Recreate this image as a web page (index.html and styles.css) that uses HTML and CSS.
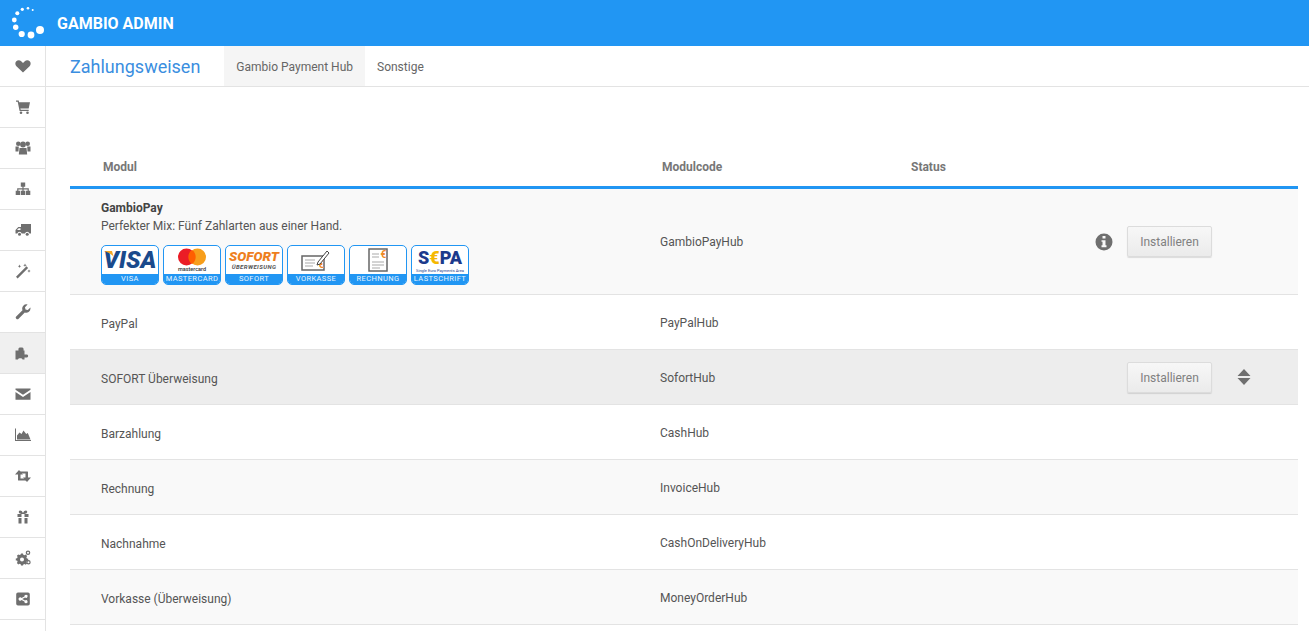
FILE: index.html
```html
<!DOCTYPE html>
<html lang="de">
<head>
    <meta charset="UTF-8">
    <meta name="viewport" content="width=device-width, initial-scale=1.0">
    <title>Zahlungsweisen</title>
    <link rel="stylesheet" href="styles.css">
</head>
<body>
    <header class="topbar">
        <svg class="logo" viewBox="0 0 46 46" width="46" height="46">
            <circle cx="40" cy="30" r="4"/><circle cx="31" cy="35" r="3.4"/><circle cx="21.7" cy="34" r="3.1"/>
            <circle cx="15.7" cy="27.3" r="2.7"/><circle cx="14.3" cy="20" r="2.4"/><circle cx="17.3" cy="13.3" r="2"/>
            <circle cx="22.3" cy="9.3" r="1.6"/><circle cx="28" cy="8.3" r="1.3"/><circle cx="32.7" cy="10" r="1"/>
        </svg>
        <span class="brand">GAMBIO ADMIN</span>
    </header>

    <div class="layout">
        <nav class="sidebar">
            <a class="side-item"><svg viewBox="0 0 16 16"><path d="M8 14.500 1.400 8.200C0 6.800 0 4.600 1.300 3.300c1.300-1.300 3.500-1.300 4.900 0L8 4.900l1.800-1.600c1.400-1.300 3.600-1.300 4.900 0 1.300 1.300 1.300 3.500-.1 4.900z"/></svg></a>
            <a class="side-item"><svg viewBox="0 0 16 16"><path d="M1 1.500h2.700l.4 1.700H15l-1.300 6.300H5.400l.3 1.300h8v1.200H4.600L2.700 2.700H1z"/><circle cx="6" cy="13.800" r="1.300"/><circle cx="12.500" cy="13.800" r="1.300"/></svg></a>
            <a class="side-item"><svg viewBox="0 0 16 16"><circle cx="3.300" cy="3.800" r="2.300"/><circle cx="12.700" cy="3.800" r="2.300"/><circle cx="8" cy="4.500" r="2.900"/><path d="M.5 6.500h3.300l-.3 5H.5zM12.200 6.500h3.300v5h-3z"/><path d="M4.500 8h7l.7 6.500H3.800z"/></svg></a>
            <a class="side-item"><svg viewBox="0 0 16 16"><path d="M5.800 1.500h4.400v4.200H8.600v1.600h5.200v2.400H15.300v4.300h-4.400V9.700h1.700V8.500H8.600v1.200h1.600v4.300H5.800V9.700h1.600V8.500H3.400v1.200h1.700v4.300H.7V9.700h1.500V7.300h5.200V5.700H5.800z"/></svg></a>
            <a class="side-item"><svg viewBox="0 0 16 16"><path d="M6 2h10v9.500h-1.600a2.300 2.300 0 0 0-4.400 0H6.700a2.300 2.300 0 0 0-4.400 0H.5V8L3.300 5H6zM2 8h3.500V6.200H3.700z"/><circle cx="4.500" cy="12.300" r="1.500"/><circle cx="12.200" cy="12.300" r="1.500"/></svg></a>
            <a class="side-item"><svg viewBox="0 0 16 16"><path d="M1 13.800 11.500 3.300l1.600 1.600L2.600 15.400z"/><path d="M10 .5l.5 1.300 1.300.5-1.300.5-.5 1.300-.5-1.300-1.300-.5 1.300-.5zM4.500 1.500l.5 1.200 1.200.5-1.200.5-.5 1.200-.5-1.200-1.200-.5 1.200-.5zM14 6.500l.5 1.100 1.100.5-1.100.5-.5 1.100-.5-1.100-1.100-.5 1.100-.5z"/></svg></a>
            <a class="side-item"><svg viewBox="0 0 16 16"><path d="M15.500 4.500a4.300 4.300 0 0 1-5.700 4L3.600 14.800a1.700 1.700 0 0 1-2.400-2.400l6.300-6.200A4.300 4.300 0 0 1 12.600.5L10 3.200l.5 2.300 2.300.5 2.600-2.600z"/></svg></a>
            <a class="side-item active"><svg viewBox="0 0 16 16"><path d="M.5 5.500H3.500C3 3 4 2.500 6 2.500S9 3 8.500 5.500H9.500V9.500H12C13.500 9.500 13.500 12.500 12 12.500H9.500V14.500H7.500C7.500 12.800 3 12.800 3 14.500H.5z"/></svg></a>
            <a class="side-item"><svg viewBox="0 0 16 16"><path d="M.5 2.500h15v1.300L8 8.800.5 3.800zM.5 6 8 11l7.500-5v7.800H.5z"/></svg></a>
            <a class="side-item"><svg viewBox="0 0 16 16"><path d="M0 1.500h1V13h15v1H0z"/><path d="M2 12.500V8.500L4.500 5.500l2 1.500L8.500 3.500l2.700 3.500 1.600-1 2.700 6.500z"/></svg></a>
            <a class="side-item"><svg viewBox="0 0 16 16"><path d="M4 2 8 6.500H5.500V10.500H11L13 12.500H3.500Q3 12.500 3 12V6.500H0z"/><path d="M12 14 8 9.500H10.500V5.500H5L3 3.500H12.500Q13 3.500 13 4V9.500H16z"/></svg></a>
            <a class="side-item"><svg viewBox="0 0 16 16"><path d="M2.500 5h11v3H9.500V5h-3v3h-4zM3.500 9h3v5.500h-3zM9.500 9h3v5.500h-3z"/><path d="M8 5C6 5 3.500 4.500 3.800 2.500 4.200.8 7 1.200 8 4 9 1.200 11.800.8 12.200 2.500 12.500 4.500 10 5 8 5z"/></svg></a>
            <a class="side-item"><svg viewBox="0 0 16 16"><path fill-rule="evenodd" d="M6 3.500h2l.3 1.300 1.200.5 1.200-.7 1.400 1.400-.7 1.200.5 1.200 1.300.3v2l-1.300.3-.5 1.200.7 1.200-1.400 1.400-1.200-.7-1.200.5L8 15.500H6l-.3-1.300-1.200-.5-1.200.7-1.400-1.400.7-1.200-.5-1.200L.8 10.500v-2L2.100 8.200l.5-1.200-.7-1.200 1.400-1.400 1.200.7 1.200-.5zM7 7.500a2 2 0 1 0 0 4 2 2 0 0 0 0-4z"/><path fill-rule="evenodd" d="M13 .5a2.300 2.300 0 1 1 0 4.600A2.300 2.300 0 0 1 13 .5zm0 1.300a1 1 0 1 0 0 2 1 1 0 0 0 0-2zM13.500 10a2.200 2.200 0 1 1 0 4.400 2.200 2.200 0 0 1 0-4.400zm0 1.200a1 1 0 1 0 0 2 1 1 0 0 0 0-2z"/></svg></a>
            <a class="side-item"><svg viewBox="0 0 16 16"><path fill-rule="evenodd" d="M3 1.500h10a1.800 1.800 0 0 1 1.800 1.800v9.400a1.800 1.800 0 0 1-1.800 1.800H3a1.800 1.800 0 0 1-1.800-1.800V3.300A1.800 1.800 0 0 1 3 1.500zM11 3.700a1.600 1.600 0 0 0-1.600 1.800L6.600 7a1.700 1.700 0 1 0 0 2l2.800 1.500a1.600 1.600 0 1 0 .6-1.100L7.200 8l2.800-1.400A1.600 1.600 0 1 0 11 3.700z"/></svg></a>
        </nav>

        <main class="content">
            <div class="subheader">
                <h1 class="page-title">Zahlungsweisen</h1>
                <a class="tab active">Gambio Payment Hub</a>
                <a class="tab">Sonstige</a>
            </div>

            <table class="modules">
                <thead>
                    <tr>
                        <th class="col-name">Modul</th>
                        <th class="col-code">Modulcode</th>
                        <th class="col-status">Status</th>
                        <th></th>
                    </tr>
                </thead>
                <tbody>
                    <tr class="odd">
                        <td class="module-cell">
                            <div class="module-title">GambioPay</div>
                            <div class="module-desc">Perfekter Mix: Fünf Zahlarten aus einer Hand.</div>
                            <div class="badges">
                                <div class="badge">
                                    <div class="badge-logo">
                                        <span class="visa"><svg class="visa-wing" viewBox="0 0 10 6" width="11" height="6"><path d="M0 0h8.500L10 5.500C8 3 4 1 0 0z" fill="#f5a623"/></svg>VISA</span>
                                    </div>
                                    <div class="badge-label">VISA</div>
                                </div>
                                <div class="badge">
                                    <div class="badge-logo mc">
                                        <svg viewBox="0 0 30 18" width="30" height="18"><circle cx="9.500" cy="9" r="8.500" fill="#eb1c26"/><circle cx="20.500" cy="9" r="8.500" fill="#f79e1b"/><path d="M15 2a8.500 8.500 0 0 1 0 14 8.500 8.500 0 0 1 0-14z" fill="#ff5f00"/></svg>
                                        <span class="mc-word">mastercard</span>
                                    </div>
                                    <div class="badge-label">MASTERCARD</div>
                                </div>
                                <div class="badge">
                                    <div class="badge-logo sofort">
                                        <span class="sofort-top">SOFORT</span>
                                        <span class="sofort-sub">ÜBERWEISUNG</span>
                                    </div>
                                    <div class="badge-label">SOFORT</div>
                                </div>
                                <div class="badge">
                                    <div class="badge-logo">
                                        <svg viewBox="0 0 30 24" width="30" height="24"><rect x="1" y="8" width="22" height="14" fill="#fff" stroke="#666" stroke-width="1.500"/><path d="M4 12h10M4 15h10M4 18h8" stroke="#aaa" stroke-width="1.200"/><text x="17" y="20" class="euro">€</text><path d="M17 14 26 3l2 2-9 11-3 1z" fill="#fff" stroke="#444"/></svg>
                                    </div>
                                    <div class="badge-label">VORKASSE</div>
                                </div>
                                <div class="badge">
                                    <div class="badge-logo">
                                        <svg viewBox="0 0 20 24" width="20" height="24"><rect x="1" y="1" width="18" height="22" fill="#fff" stroke="#666" stroke-width="1.500"/><path d="M4 6h7M4 9h7M4 14h12M4 17h12M4 20h8" stroke="#aaa" stroke-width="1.200"/><text x="12.500" y="10" class="euro">€</text></svg>
                                    </div>
                                    <div class="badge-label">RECHNUNG</div>
                                </div>
                                <div class="badge">
                                    <div class="badge-logo sepa">
                                        <span class="sepa-word">S<i>€</i>PA</span>
                                        <span class="sepa-sub">Single Euro Payments Area</span>
                                    </div>
                                    <div class="badge-label">LASTSCHRIFT</div>
                                </div>
                            </div>
                        </td>
                        <td>GambioPayHub</td>
                        <td></td>
                        <td>
                            <div class="actions">
                                <svg class="info" viewBox="0 0 18 18" width="18" height="18"><path fill-rule="evenodd" d="M9 .5a8.500 8.500 0 1 1 0 17 8.500 8.500 0 0 1 0-17zM7.500 3v2.600h3V3zM6.500 7.200v1.600h1v3.400h-1v2h5v-2h-1V7.200z"/></svg>
                                <button class="btn">Installieren</button>
                            </div>
                        </td>
                    </tr>
                    <tr class="plain"><td>PayPal</td><td>PayPalHub</td><td></td><td></td></tr>
                    <tr class="plain hover">
                        <td>SOFORT Überweisung</td>
                        <td>SofortHub</td>
                        <td></td>
                        <td>
                            <div class="actions">
                                <button class="btn">Installieren</button>
                                <svg class="sort" viewBox="0 0 14 18" width="14" height="18"><path d="M7 1l6.500 7H.5zM7 17 .5 10h13z"/></svg>
                            </div>
                        </td>
                    </tr>
                    <tr class="plain"><td>Barzahlung</td><td>CashHub</td><td></td><td></td></tr>
                    <tr class="plain odd"><td>Rechnung</td><td>InvoiceHub</td><td></td><td></td></tr>
                    <tr class="plain"><td>Nachnahme</td><td>CashOnDeliveryHub</td><td></td><td></td></tr>
                    <tr class="plain odd"><td>Vorkasse (Überweisung)</td><td>MoneyOrderHub</td><td></td><td></td></tr>
                </tbody>
            </table>
        </main>
    </div>
</body>
</html>
```

FILE: styles.css
```css
html, body {
    height: 100%;
}
body {
    margin: 0;
    font-family: Roboto, Arial, sans-serif;
    font-size: 12px;
    color: #555;
    background-color: #fff;
    overflow: hidden;
}
.topbar {
    display: flex;
    align-items: center;
    height: 46px;
    background-color: #2196f3;
    color: white;
}
.logo {
    flex: none;
    fill: white;
}
.brand {
    margin-left: 11px;
    font-size: 16px;
    font-weight: 700;
}
.layout {
    display: flex;
    height: 585px;
}
.sidebar {
    flex: none;
    width: 45px;
    border-right: 1px solid #e3e3e3;
}
.side-item {
    display: flex;
    align-items: center;
    justify-content: center;
    height: 40px;
    border-bottom: 1px solid #e3e3e3;
}
.side-item svg {
    width: 16px;
    height: 16px;
    fill: #6f6f6f;
}
.side-item.active {
    background-color: #f0f0f0;
}
.content {
    flex: 1;
    min-width: 0;
}
.subheader {
    display: flex;
    align-items: stretch;
    height: 40px;
    padding-left: 24px;
    border-bottom: 1px solid #e3e3e3;
}
.page-title {
    margin: 0 24px 0 0;
    font-size: 18px;
    font-weight: 400;
    line-height: 41px;
    color: #3a8ee0;
}
.tab {
    padding: 0 12px;
    line-height: 42px;
    color: #666;
}
.tab.active {
    background-color: #f5f5f5;
}
.modules {
    width: 1228px;
    margin: 63px 0 0 24px;
    border-collapse: collapse;
    table-layout: fixed;
}
.modules th {
    height: 33px;
    padding: 0 0 3px 33px;
    text-align: left;
    font-weight: 700;
    color: #777;
    border-bottom: 3px solid #2196f3;
}
.col-name {
    width: 526px;
}
.col-code {
    width: 216px;
}
.col-status {
    width: 185px;
}
.modules td {
    height: 54px;
    padding: 0 0 0 31px;
    border-bottom: 1px solid #e3e3e3;
}
.modules td.module-cell {
    padding-top: 12px;
    padding-bottom: 9px;
}
/* plain rows: text sits a little under the middle, name lower than code */
.modules tr.plain td:first-child {
    height: 50px;
    padding-top: 4px;
}
.modules tr.plain td:nth-child(2) {
    height: 52px;
    padding-top: 2px;
}
.modules tr.odd td {
    background-color: #f9f9f9;
}
.modules tr.hover td {
    background-color: #ededed;
}
.module-title {
    font-weight: 700;
    color: #444;
    line-height: 15px;
}
.module-desc {
    margin-top: 2px;
    line-height: 16px;
}
.badges {
    display: flex;
    gap: 4px;
    margin-top: 11px;
}
.badge {
    display: flex;
    flex-direction: column;
    width: 58px;
    height: 40px;
    box-sizing: border-box;
    border: 1px solid #2196f3;
    border-radius: 5px;
    background-color: white;
    overflow: hidden;
}
.badge-logo {
    flex: 1;
    display: flex;
    flex-direction: column;
    align-items: center;
    justify-content: center;
    min-height: 0;
}
.badge-label {
    height: 10px;
    background-color: #2196f3;
    color: #e8f4fe;
    font-size: 7.5px;
    line-height: 10px;
    letter-spacing: 0.4px;
    text-align: center;
    white-space: nowrap;
}
.visa {
    position: relative;
    font-size: 24px;
    line-height: 24px;
    font-weight: 900;
    font-style: italic;
    color: #1a4a8c;
}
.visa-wing {
    position: absolute;
    left: -1px;
    top: 3px;
}
.mc svg {
    display: block;
}
.mc-word {
    font-size: 5.5px;
    line-height: 6px;
    font-weight: 500;
    color: #333;
}
.sofort-top {
    font-size: 13.5px;
    line-height: 14px;
    font-weight: 900;
    font-style: italic;
    color: #ee7f1e;
}
.sofort-sub {
    font-size: 6px;
    line-height: 8px;
    font-weight: 700;
    font-style: italic;
    letter-spacing: 0.4px;
    color: #555;
}
.euro {
    font-size: 10px;
    font-weight: 700;
    fill: #f08a24;
}
.sepa-word {
    font-size: 18px;
    line-height: 21px;
    font-weight: 900;
    color: #1c3a8c;
}
.sepa-word i {
    font-style: normal;
    color: #f5b800;
}
.sepa-sub {
    font-size: 4px;
    line-height: 5px;
    color: #1c3a8c;
    white-space: nowrap;
}
/* info icon sits left of the cell edge, buttons line up across rows */
.actions {
    display: grid;
    grid-template-columns: 18px 85px 14px;
    column-gap: 14px;
    align-items: center;
    margin-left: -32px;
}
.actions .btn {
    grid-column: 2;
}
.info {
    fill: #6f6f6f;
}
.sort {
    grid-column: 3;
    margin-left: 11px;
    fill: #6f6f6f;
}
.btn {
    width: 85px;
    height: 31px;
    padding: 1px 0 0;
    font-family: inherit;
    font-size: 12px;
    color: #808080;
    background: linear-gradient(#f7f7f7, #ebebeb);
    border: 1px solid #dcdcdc;
    border-radius: 2px;
    box-shadow: 0 1px 1px rgba(0,0,0,0.12);
    cursor: pointer;
}
```
